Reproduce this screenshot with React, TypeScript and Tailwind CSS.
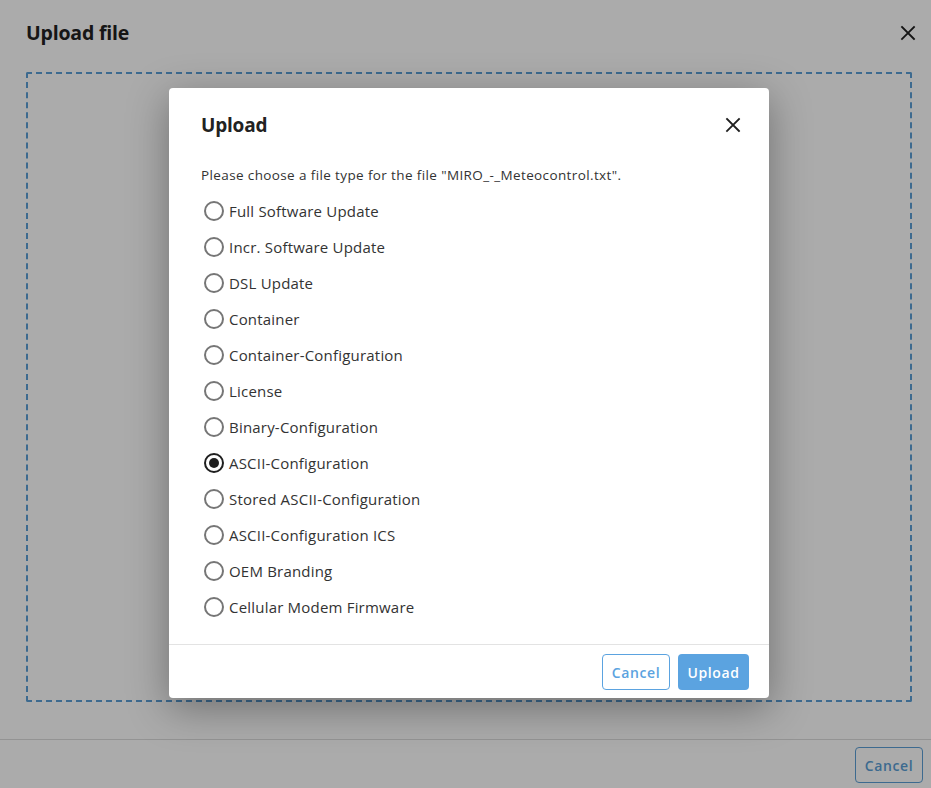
import { useState } from "react"

const fileTypes = [
  "Full Software Update",
  "Incr. Software Update",
  "DSL Update",
  "Container",
  "Container-Configuration",
  "License",
  "Binary-Configuration",
  "ASCII-Configuration",
  "Stored ASCII-Configuration",
  "ASCII-Configuration ICS",
  "OEM Branding",
  "Cellular Modem Firmware",
]

const CloseIcon = ({ size = 16 }: { size?: number }) => (
  <svg width={size} height={size} viewBox="0 0 16 16" fill="none" stroke="#1f1f1f" strokeWidth="1.8" strokeLinecap="square">
    <path d="M2 2L14 14M14 2L2 14" />
  </svg>
)

const Radio = ({ checked }: { checked: boolean }) => (
  <span
    className={`flex h-[20px] w-[20px] shrink-0 items-center justify-center rounded-full border-2 ${
      checked ? "border-[#1f1f1f]" : "border-[#767676]"
    }`}
  >
    {checked && <span className="h-[10px] w-[10px] rounded-full bg-[#1f1f1f]" />}
  </span>
)

export default function App() {
  const [selected, setSelected] = useState("ASCII-Configuration")

  return (
    <div className="relative h-[788px] w-full overflow-hidden bg-white font-['Open_Sans',sans-serif] text-[#222]">
      {/* page underneath */}
      <div className="flex h-full flex-col">
        <div className="flex items-center justify-between px-[26px] pt-[19px]">
          <h1 className="text-[19.5px] font-bold leading-[28px] tracking-[-0.2px]">Upload file</h1>
          <button className="mr-[-11px]">
            <CloseIcon />
          </button>
        </div>
        <div className="mx-[26px] mt-[25px] h-[630px] w-[886px] rounded-[2px] border-2 border-dashed border-[#5b9fd6]" />
        <div className="mt-[37px] border-t border-[#dcdcdc]" />
        <div className="flex justify-end px-[8px] pt-[7px]">
          <button className="h-[36px] w-[68px] rounded-[4px] border border-[#5b9fd6] text-[14px] font-semibold tracking-[0.6px] text-[#5b9fd6]">
            Cancel
          </button>
        </div>
      </div>

      {/* backdrop */}
      <div className="absolute inset-0 bg-black/[0.33]" />

      {/* dialog */}
      <div className="absolute left-[169px] top-[88px] flex h-[610px] w-[600px] flex-col rounded-[4px] bg-white shadow-[0_10px_40px_rgba(0,0,0,0.35)]">
        <div className="flex items-center justify-between px-[32px] pt-[24px]">
          <h2 className="text-[19px] font-bold leading-[26px] tracking-[-0.2px]">Upload</h2>
          <button className="mr-[-4px]">
            <CloseIcon />
          </button>
        </div>
        <p className="mt-[27px] px-[32px] text-[13.5px] leading-[20px] tracking-[0.38px] text-[#333]">
          Please choose a file type for the file "MIRO_-_Meteocontrol.txt".
        </p>
        <div className="mt-[8px] flex flex-col px-[35px]">
          {fileTypes.map((t) => (
            <label key={t} className="flex h-[36px] cursor-pointer items-center gap-[5px]" onClick={() => setSelected(t)}>
              <Radio checked={selected === t} />
              <span className="text-[15px] tracking-[0.2px] text-[#333]">{t}</span>
            </label>
          ))}
        </div>
        <div className="mt-auto flex justify-end gap-[8px] border-t border-[#e3e3e3] px-[20px] pb-[8px] pt-[9px]">
          <button className="h-[36px] w-[68px] rounded-[4px] border border-[#5ba3e0] text-[14px] font-semibold tracking-[0.6px] text-[#5ba3e0]">
            Cancel
          </button>
          <button className="h-[36px] w-[71px] rounded-[4px] bg-[#5ba3e0] text-[14px] font-semibold tracking-[0.6px] text-white">
            Upload
          </button>
        </div>
      </div>
    </div>
  )
}
